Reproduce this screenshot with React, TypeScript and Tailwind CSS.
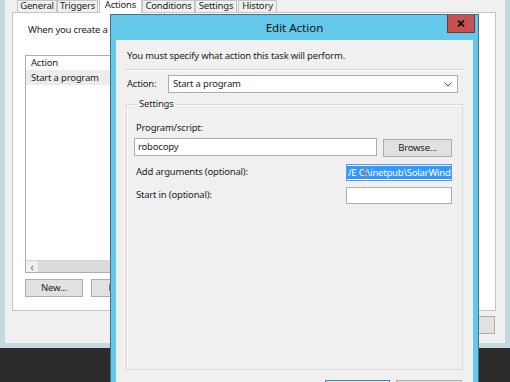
import React from 'react'

const font = "font-['Segoe_UI','Noto_Sans',sans-serif]"

const Tab = ({ label, w, active = false }: { label: string; w: string; active?: boolean }) => (
  <div
    className={
      active
        ? `${w} h-[15px] -mt-[3px] -mb-px bg-white border border-b-0 border-[#c5c5c5] flex items-start justify-center relative z-10`
        : `${w} h-[12px] bg-[#f0f0f0] border border-b-0 border-[#c5c5c5] flex items-end justify-center`
    }
  >
    <span className="leading-[12px]">{label}</span>
  </div>
)

const WinButton = ({ label, w, primary = false }: { label: string; w: string; primary?: boolean }) => (
  <div
    className={`${w} h-[18px] shrink-0 flex items-center justify-center border ${
      primary ? 'border-[#3c7fb1] bg-[#e5f1fb]' : 'border-[#adadad] bg-[#e1e1e1]'
    }`}
  >
    {label}
  </div>
)

export default function App() {
  return (
    <div
      className={`relative w-[510px] h-[382px] overflow-hidden bg-[#2b2b2b] text-[9.5px] tracking-[-0.2px] text-[#1e1e1e] ${font}`}
    >
      {/* background task properties window */}
      <div className="h-[348px] bg-[#c6d9e0] px-[5px] pb-[5px]">
        <div className="h-full bg-[#f0f0f0] pl-[7px] pr-[9px] flex flex-col">
          {/* tabs */}
          <div className="flex items-end h-[12px] shrink-0 pl-[5px]">
            <Tab label="General" w="w-[40px]" />
            <Tab label="Triggers" w="w-[41px]" />
            <div className="w-[1px]" />
            <Tab label="Actions" w="w-[43px]" active />
            <Tab label="Conditions" w="w-[53px]" />
            <Tab label="Settings" w="w-[42px]" />
            <div className="w-[1px]" />
            <Tab label="History" w="w-[39px]" />
          </div>

          {/* tab panel */}
          <div className="h-[299px] shrink-0 bg-white border border-[#c5c5c5] pl-[12px] flex flex-col">
            <div className="mt-[10px] ml-[3px] leading-[14px] whitespace-nowrap">
              When you create a task, you must specify the action that will occur when your task starts.
            </div>
            <div className="mt-[18px] w-[445px] h-[218px] border border-[#adadad] flex flex-col">
              <div className="h-[14px] pl-[5px] leading-[14px]">Action</div>
              <div className="h-[15px] pl-[5px] leading-[15px] bg-[#ececec]">Start a program</div>
              <div className="flex-1" />
              <div className="h-[12px] flex border-t border-[#d4d4d4]">
                <div className="w-[12px] bg-[#f0f0f0] flex items-center justify-center text-[#606060] text-[10px] leading-none">
                  ‹
                </div>
                <div className="flex-1 bg-[#dcdcdc]" />
              </div>
            </div>
            <div className="mt-[6px] flex gap-[8px]">
              <WinButton label="New..." w="w-[58px]" />
              <WinButton label="Edit..." w="w-[58px]" />
            </div>
          </div>

          {/* OK / Cancel of background window */}
          <div className="mt-[5px] flex justify-end gap-[7px] pr-[1px]">
            <WinButton label="OK" w="w-[65px]" />
            <WinButton label="Cancel" w="w-[65px]" />
          </div>
        </div>
      </div>

      {/* Edit Action dialog */}
      <div className="absolute left-[110px] top-[14px] w-[369px] h-[380px] bg-[#63c8ea] border border-[#44707f] px-[5px] flex flex-col">
        <div className="h-[25px] shrink-0 flex items-center justify-center relative">
          <span className="text-[11.5px] tracking-normal text-[#111]">Edit Action</span>
          <div className="absolute -right-[2px] top-0 w-[28px] h-[18px] bg-[#c75050] border border-[#6b3a3a] border-t-0 flex items-center justify-center">
            <svg width="8" height="7" viewBox="0 0 8 7">
              <path d="M1 0.5 L7 6.5 M7 0.5 L1 6.5" stroke="#111" strokeWidth="1.8" />
            </svg>
          </div>
        </div>

        <div className="flex-1 bg-[#f0f0f0] flex flex-col px-[9px]">
          <div className="mt-[9px] ml-[2px] leading-[14px]">You must specify what action this task will perform.</div>
          <div className="mt-[6px] h-[2px] shrink-0 border-t border-[#d5d5d5] border-b border-b-white" />

          <div className="mt-[4px] flex items-center h-[18px] shrink-0">
            <span className="w-[41px] ml-[2px]">Action:</span>
            <div className="w-[290px] h-[18px] bg-white border border-[#acacac] flex items-center justify-between pl-[4px] pr-[5px]">
              <span>Start a program</span>
              <svg width="8" height="5" viewBox="0 0 8 5">
                <path d="M0.5 0.5 L4 4 L7.5 0.5" fill="none" stroke="#444" strokeWidth="1" />
              </svg>
            </div>
          </div>

          <fieldset className="mt-[5px] ml-[1px] w-[337px] h-[272px] shrink-0 border border-[#d9d9d9] shadow-[inset_1px_1px_0_#ffffff] pl-[7px] flex flex-col">
            <legend className="ml-[3px] px-[2px] leading-[12px]">Settings</legend>
            <div className="mt-[11px] ml-[2px] leading-[14px]">Program/script:</div>
            <div className="mt-[3px] flex items-start">
              <div className="w-[243px] h-[18px] bg-white border border-[#acacac] pl-[3px] leading-[16px]">robocopy</div>
              <div className="ml-[6px] mt-px w-[69px] h-[18px] bg-[#e1e1e1] border border-[#adadad] flex items-center justify-center">
                Browse...
              </div>
            </div>
            <div className="mt-[7px] flex items-center h-[17px]">
              <span className="w-[210px] ml-[2px]">Add arguments (optional):</span>
              <div className="w-[106px] h-[17px] bg-white border border-[#569de5] overflow-hidden flex items-center pl-px">
                <span className="whitespace-nowrap bg-[#3399ff] text-white leading-[13px] -ml-[3px] pl-[3px] relative">
                  /E C:\inetpub\SolarWinds
                  <span className="absolute left-[19px] top-0 w-px h-[13px] bg-[#e8731a]" />
                </span>
              </div>
            </div>
            <div className="mt-[6px] flex items-center h-[17px]">
              <span className="w-[210px] ml-[2px]">Start in (optional):</span>
              <div className="w-[106px] h-[17px] bg-white border border-[#adadad]" />
            </div>
          </fieldset>

          <div className="mt-[10px] flex justify-end gap-[6px] pr-[2px]">
            <WinButton label="OK" w="w-[65px]" primary />
            <WinButton label="Cancel" w="w-[66px]" />
          </div>
        </div>
      </div>
    </div>
  )
}
